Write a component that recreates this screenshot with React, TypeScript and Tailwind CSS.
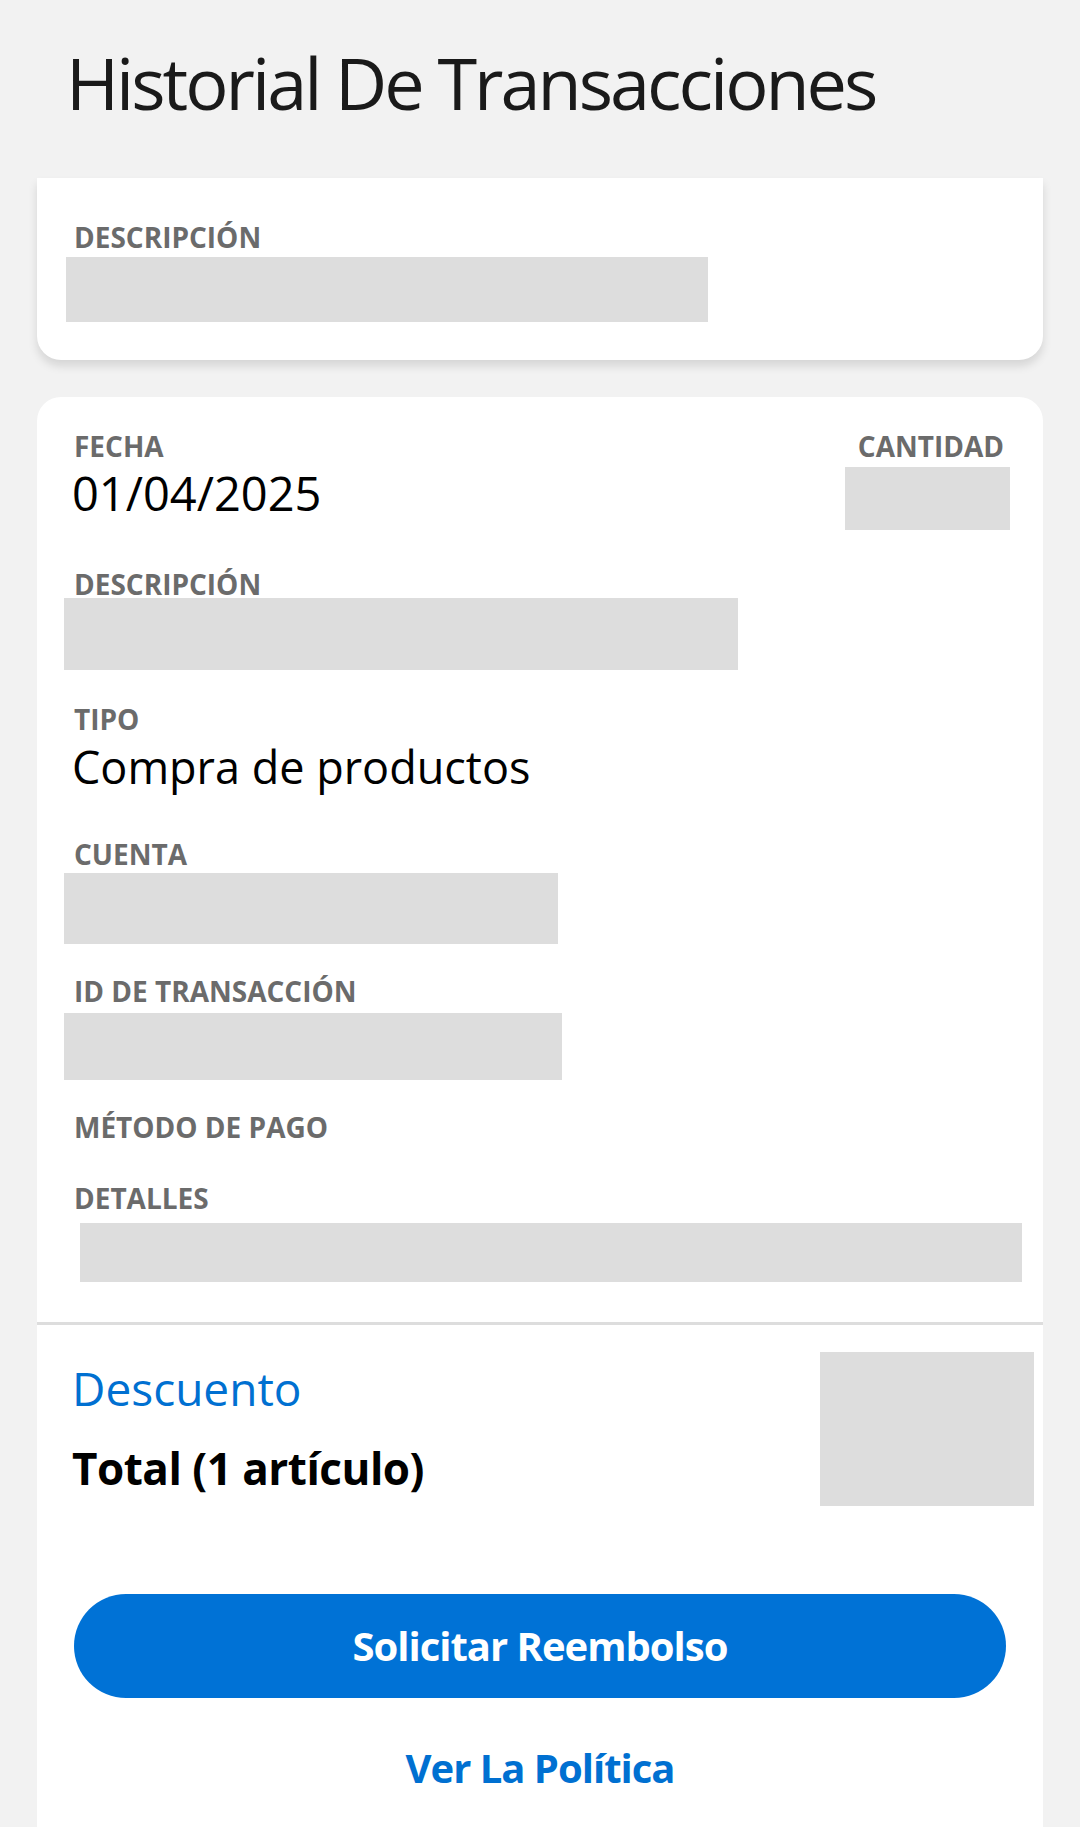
import React from 'react';

const font = { fontFamily: '"Open Sans", "Noto Sans", sans-serif' };

function Label({ children, className = '' }: { children: React.ReactNode; className?: string }) {
  return (
    <div className={`text-[28px] leading-none font-bold uppercase text-[#6b6b6b] pl-[8px] ${className}`}>
      {children}
    </div>
  );
}

function Block({ className = '' }: { className?: string }) {
  return <div className={`bg-[#dddddd] ${className}`} />;
}

export default function App() {
  return (
    <div className="min-h-[1827px] bg-[#f2f2f2] overflow-hidden" style={font}>
      <h1 className="pt-[46px] pl-[66px] text-[72px] leading-none font-normal text-[#1a1a1a] tracking-[-3px]">
        Historial De Transacciones
      </h1>

      {/* resumen */}
      <div className="mt-[60px] mx-[37px] bg-white rounded-b-[24px] shadow-[0_6px_10px_rgba(0,0,0,0.12)] pt-[45px] pb-[38px] pl-[29px]">
        <Label>Descripción</Label>
        <Block className="mt-[6px] w-[642px] h-[65px]" />
      </div>

      {/* detalle */}
      <div className="mt-[37px] mx-[37px] bg-white rounded-t-[24px] pt-[35px] pb-[60px]">
        <div className="pl-[27px] pr-[33px]">
          <div className="flex items-start justify-between">
            <div>
              <Label className="pl-[10px]">Fecha</Label>
              <div className="mt-[10px] pl-[8px] text-[47px] leading-none text-black">01/04/2025</div>
            </div>
            <div className="flex flex-col items-end">
              <Label className="pr-[6px]">Cantidad</Label>
              <Block className="mt-[7px] w-[165px] h-[63px]" />
            </div>
          </div>

          <Label className="mt-[40px] pl-[10px]">Descripción</Label>
          <Block className="mt-0 w-[674px] h-[72px]" />

          <Label className="mt-[35px] pl-[10px]">Tipo</Label>
          <div className="mt-[11px] pl-[8px] text-[45px] leading-none text-black">Compra de productos</div>

          <Label className="mt-[51px] pl-[10px]">Cuenta</Label>
          <Block className="mt-[5px] w-[494px] h-[71px]" />

          <Label className="mt-[33px] pl-[10px]">ID de transacción</Label>
          <Block className="mt-[8px] w-[498px] h-[67px]" />

          <Label className="mt-[33px] pl-[10px]">Método de pago</Label>

          <Label className="mt-[43px] pl-[10px]">Detalles</Label>
          <Block className="mt-[11px] ml-[16px] w-[942px] h-[59px]" />
        </div>

        <div className="mt-[40px] h-[3px] bg-[#dddddd]" />

        <div className="pt-[27px] pl-[35px] pr-[9px] flex items-start justify-between">
          <div className="pt-[13px]">
            <div className="text-[46px] leading-none text-[#0070d1]">Descuento</div>
            <div className="mt-[35px] text-[44px] leading-none font-bold text-black tracking-[-0.5px]">Total (1 artículo)</div>
          </div>
          <Block className="w-[214px] h-[154px]" />
        </div>

        <div className="mt-[88px] mx-[37px]">
          <button className="w-full h-[104px] rounded-full bg-[#0072d6] text-white text-[40px] leading-none font-bold tracking-[-1px]">
            Solicitar Reembolso
          </button>
        </div>

        <div className="mt-[50px] text-center text-[40px] leading-none font-bold text-[#0070d1] tracking-[-1px]">
          Ver La Política
        </div>
      </div>
    </div>
  );
}
